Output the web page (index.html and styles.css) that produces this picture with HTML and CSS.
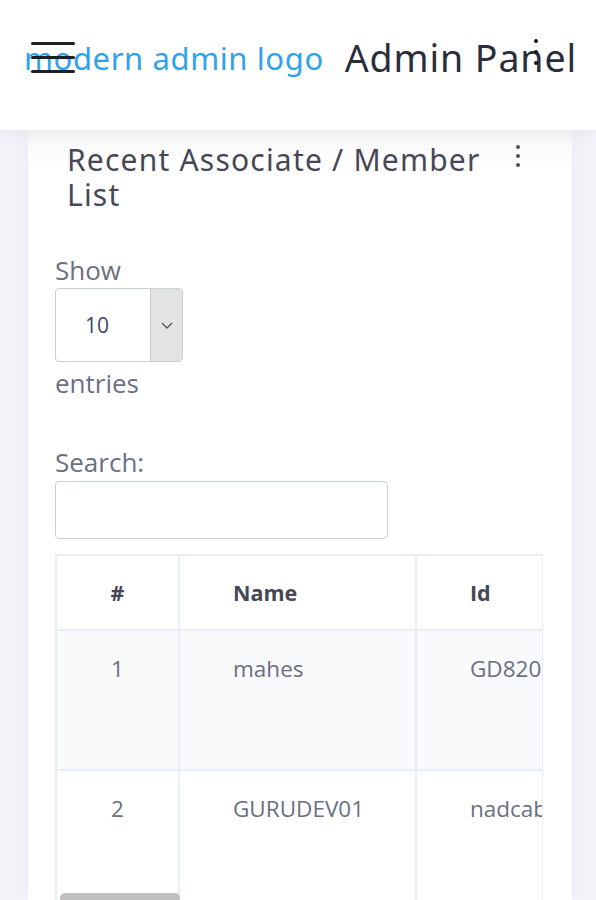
FILE: index.html
```html
<!DOCTYPE html>
<html>
<head>
<meta charset="utf-8">
<link rel="stylesheet" href="styles.css">
</head>
<body>
<header class="topbar">
  <span class="hamburger"><i></i><i></i><i></i></span>
  <span class="logo">modern admin logo</span>
  <span class="brand">Admin Panel</span>
  <span class="topdots"><i></i><i></i><i></i></span>
</header>
<main class="page">
  <section class="card">
    <div class="card-head">
      <h4 class="card-title">Recent Associate / Member List</h4>
      <span class="card-dots"><i></i><i></i><i></i></span>
    </div>
    <div class="card-body">
      <div class="length">
        <div class="label">Show</div>
        <div class="select"><span class="select-val">10</span><span class="select-btn"><svg width="14" height="9" viewBox="0 0 14 9"><path d="M2 2 L7 7 L12 2" fill="none" stroke="#555" stroke-width="1.4"/></svg></span></div>
        <div class="label">entries</div>
      </div>
      <div class="search">
        <div class="label">Search:</div>
        <div class="input"></div>
      </div>
      <div class="table-wrap">
        <table class="tbl">
          <thead>
            <tr><th class="c1">#</th><th class="c2">Name</th><th class="c3">Id</th></tr>
          </thead>
          <tbody>
            <tr class="odd"><td class="c1">1</td><td class="c2">mahes</td><td class="c3">GD820</td></tr>
            <tr><td class="c1">2</td><td class="c2">GURUDEV01</td><td class="c3">nadcab</td></tr>
          </tbody>
        </table>
        <div class="thumb"></div>
      </div>
    </div>
  </section>
</main>
</body>
</html>
```
FILE: styles.css
```css
html, body { margin: 0; padding: 0; }
body { background: #f4f5fa; font-family: "Open Sans", sans-serif; overflow: hidden; height: 900px; }

.topbar {
  position: relative;
  z-index: 2;
  height: 130px;
  box-sizing: border-box;
  padding: 0 0 14px 24px;
  background: #fff;
  display: flex;
  align-items: center;
  box-shadow: 0 2px 14px rgba(60, 70, 110, 0.10);
  font-family: "Noto Sans", sans-serif;
}
.logo { color: #2fa3ea; font-size: 31px; letter-spacing: 0.6px; line-height: 1; font-weight: 400; white-space: nowrap; }
.brand { color: #2a2d3a; font-size: 37.5px; margin-left: 21px; line-height: 1; letter-spacing: 0.9px; white-space: nowrap; }
.hamburger {
  position: absolute; left: 31px; top: 42px; width: 44px;
  display: flex; flex-direction: column; gap: 11px;
}
.hamburger i { display: block; height: 3px; background: #1f2026; border-radius: 2px; }
.topdots {
  position: absolute; left: 534px; top: 39px;
  display: flex; flex-direction: column; gap: 7px;
}
.topdots i { display: block; width: 4px; height: 4px; border-radius: 50%; background: #15171c; }

.page { padding: 0 24px 0 28px; }
.card { background: #fff; height: 770px; overflow: hidden; box-shadow: 0 0 20px rgba(60, 70, 120, 0.06); }
.card-head { position: relative; padding: 12px 60px 0 39px; background: linear-gradient(#f8f8fa, #fff 40px); }
.card-title {
  margin: 0; font-family: "Noto Sans", sans-serif; font-weight: 400;
  font-size: 30px; line-height: 35px; color: #464855; letter-spacing: 1.2px;
}
.card-dots {
  position: absolute; left: 488px; top: 15px;
  display: flex; flex-direction: column; gap: 5px;
}
.card-dots i { display: block; width: 4px; height: 4px; border-radius: 50%; background: #4b4f5c; }

.card-body { padding: 43px 29px 0 27px; }
.label { color: #6b6f82; font-size: 26px; line-height: 31px; }
.length .label:first-child { margin-bottom: 2px; }
.select {
  width: 126px; height: 72px; border: 1px solid #cacfd6; border-radius: 4px;
  display: flex; margin-bottom: 6px; overflow: hidden;
}
.select-val { flex: 1; display: flex; align-items: center; padding-left: 29px; font-size: 21px; color: #3b4a6b; }
.select-btn { width: 31px; background: #e3e3e3; border-left: 1px solid #c8c8c8; display: flex; align-items: center; justify-content: center; }
.search { margin-top: 48px; }
.search .label { margin-bottom: 3px; }
.input { width: 331px; height: 56px; border: 1px solid #cacfd6; border-radius: 4px; }

.table-wrap { position: relative; margin-top: 15px; width: 488px; height: 420px; overflow: hidden; border-right: 1px solid #e8eef4; box-sizing: border-box; }
.tbl { border-collapse: collapse; width: 640px; table-layout: fixed; }
.tbl th, .tbl td { box-sizing: border-box; border: 2px solid #e9eef4; text-align: left; vertical-align: top; color: #6b6f82; font-size: 22.5px; }
.tbl th { height: 75px; vertical-align: middle; font-weight: 700; color: #464855; font-size: 21.5px; padding: 0 0 0 53px; }
.tbl td { height: 140px; padding: 22px 0 0 53px; }
.tbl .c1 { width: 123px; text-align: center; padding-left: 0; }
.tbl .c2 { width: 237px; }
.tbl .c3 { padding-left: 53px; }
.tbl tr.odd td { background: #f8fafc; }
.thumb { position: absolute; left: 5px; top: 339px; width: 120px; height: 12px; background: #c1c1c1; border-radius: 5px 5px 0 0; }
```
